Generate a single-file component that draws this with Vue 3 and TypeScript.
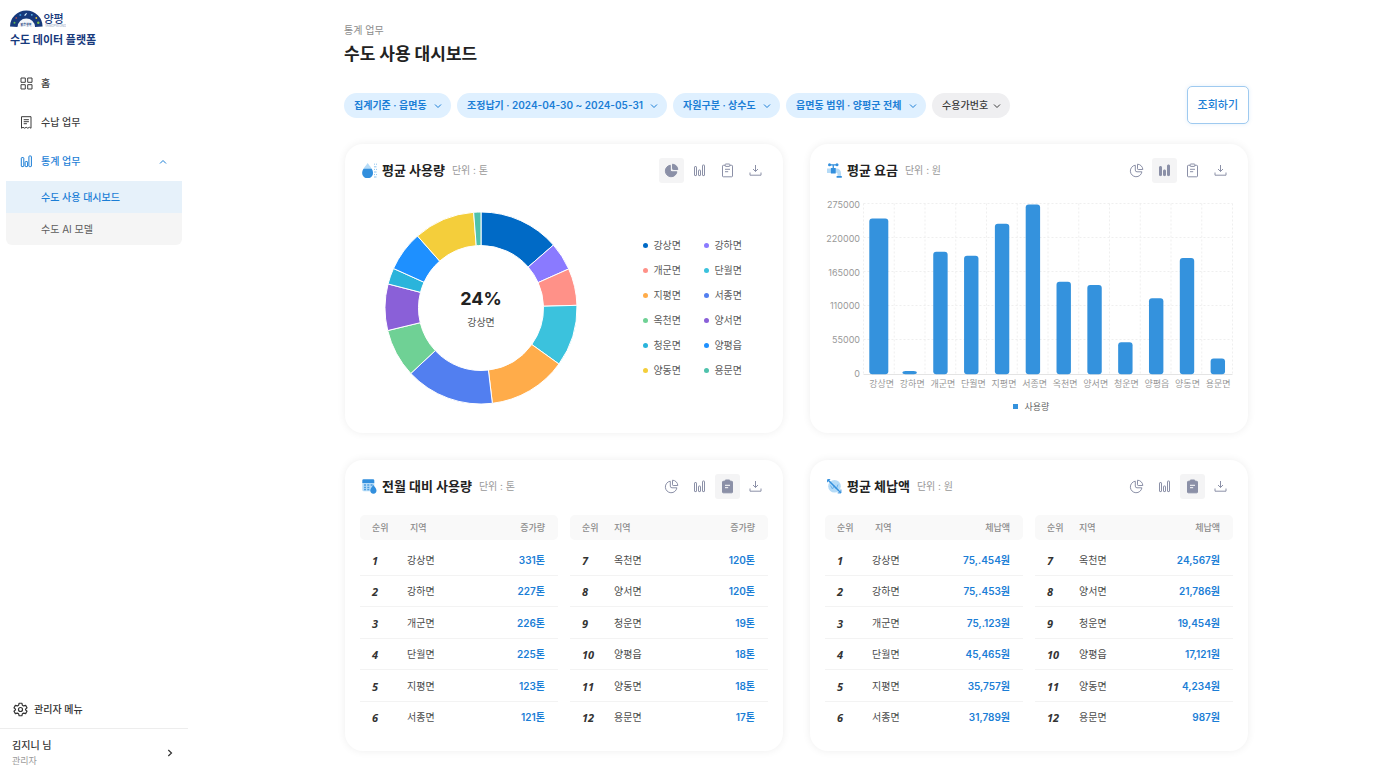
<script setup lang="ts">
import { reactive } from 'vue'

type View = 'pie' | 'bar' | 'list'
type CardKey = 'usage' | 'fee' | 'change' | 'arrears'

interface Slice {
  name: string
  color: string
  end: number
}

interface RankRow {
  rank: number
  region: string
  value: string
}

const slices: Slice[] = [
  { name: '강상면', color: '#006ac6', end: 49 },
  { name: '강하면', color: '#8a7aff', end: 66 },
  { name: '개군면', color: '#ff9188', end: 88.4 },
  { name: '단월면', color: '#3bc2dd', end: 125.7 },
  { name: '지평면', color: '#ffac4a', end: 173.2 },
  { name: '서종면', color: '#527ff0', end: 227 },
  { name: '옥천면', color: '#6fd195', end: 256.4 },
  { name: '양서면', color: '#8a60d8', end: 284.5 },
  { name: '청운면', color: '#2ab4db', end: 294.3 },
  { name: '양평읍', color: '#1e90ff', end: 318.6 },
  { name: '양동면', color: '#f4ce3b', end: 355.6 },
  { name: '용문면', color: '#4fc2ac', end: 360 },
]

function point(radius: number, degrees: number): string {
  const a = (degrees * Math.PI) / 180
  return `${(96 + radius * Math.sin(a)).toFixed(2)} ${(96 - radius * Math.cos(a)).toFixed(2)}`
}

function slicePath(index: number): string {
  const start = index === 0 ? 0 : slices[index - 1].end
  const end = slices[index].end
  const outer = 96
  const inner = 62.5
  return `M${point(outer, start)}A${outer} ${outer} 0 0 1 ${point(outer, end)}L${point(inner, end)}A${inner} ${inner} 0 0 0 ${point(inner, start)}Z`
}

const ticks = [275000, 220000, 165000, 110000, 55000, 0]
const fees = [250500, 5500, 197000, 190500, 242000, 273000, 149000, 143500, 51500, 122500, 187000, 25500]
const bars = fees.map((fee, i) => {
  const width = i === 0 ? 19 : 14.4
  const height = (fee / 275000) * 171
  return { x: 53.8 + i * 30.82 - width / 2, y: 177.3 - height, width, height, name: slices[i].name, labelX: 56.7 + i * 30.58 }
})

function rows(values: string[]): RankRow[][] {
  const all = values.map((value, i) => ({ rank: i + 1, region: slices[i].name, value }))
  return [all.slice(0, 6), all.slice(6)]
}

const tables: { key: CardKey; title: string; unit: string; column: string; groups: RankRow[][] }[] = [
  {
    key: 'change',
    title: '전월 대비 사용량',
    unit: '톤',
    column: '증가량',
    groups: rows(['331톤', '227톤', '226톤', '225톤', '123톤', '121톤', '120톤', '120톤', '19톤', '18톤', '18톤', '17톤']),
  },
  {
    key: 'arrears',
    title: '평균 체납액',
    unit: '원',
    column: '체납액',
    groups: rows(['75,.454원', '75,.453원', '75,.123원', '45,465원', '35,757원', '31,789원', '24,567원', '21,786원', '19,454원', '17,121원', '4,234원', '987원']),
  },
]

const cards: { key: CardKey; title: string; unit: string }[] = [
  { key: 'usage', title: '평균 사용량', unit: '톤' },
  { key: 'fee', title: '평균 요금', unit: '원' },
  ...tables,
]

const views: { key: View; label: string }[] = [
  { key: 'pie', label: '원형 차트' },
  { key: 'bar', label: '막대 차트' },
  { key: 'list', label: '표' },
]

const active = reactive<Record<CardKey, View>>({ usage: 'pie', fee: 'bar', change: 'list', arrears: 'list' })

const filters: { kind: 'select' | 'button'; label: string; plain?: boolean }[] = [
  { kind: 'select', label: '집계기준 · 읍면동' },
  { kind: 'button', label: '조정납기 · 2024-04-30 ~ 2024-05-31' },
  { kind: 'select', label: '자원구분 · 상수도' },
  { kind: 'select', label: '읍면동 범위 · 양평군 전체' },
  { kind: 'button', label: '수용가번호', plain: true },
]
</script>

<template>
  <div class="layout">
    <aside class="sidebar">
      <a href="#" class="brand">
        <svg class="brand-mark" width="56" height="18" viewBox="0 0 56 18" aria-hidden="true">
          <path d="M0 16.500A16.300 16 0 0 1 32.600 16.500L25 17A9 8.500 0 0 0 7.600 17Z" fill="#17397c" />
          <path d="M7.600 17A8.700 8.500 0 0 1 25 17Z" fill="#f3f6fa" />
          <circle cx="4.500" cy="12.800" r="1" fill="#5fb84f" />
          <circle cx="6.200" cy="8" r=".8" fill="#e2574c" />
          <circle cx="10.300" cy="5" r="1" fill="#3d9ae0" />
          <path d="M14.500 5.500c1-.2.900-1.700 2.300-2" stroke="#d7f0ff" stroke-width="1.200" fill="none" />
          <circle cx="21.800" cy="4.800" r=".9" fill="#5fb9e8" />
          <circle cx="26.300" cy="8" r=".9" fill="#e3c43e" />
          <circle cx="28.300" cy="12.800" r="1.200" fill="#7fc34b" />
          <text x="10.500" y="16" class="mark-small">맑은행복</text>
          <text x="33.500" y="13" class="mark-name">양평</text>
          <text x="35" y="17" class="mark-latin">YANGPYEONG</text>
        </svg>
        <span class="brand-name">수도 데이터 플랫폼</span>
      </a>

      <nav class="nav">
        <a href="#" class="nav-item">
          <svg width="13" height="13" viewBox="0 0 13 13" fill="none" stroke="currentColor">
            <path d="M1 1h4.300v4.300H1zM7.700 1H12v4.300H7.700zM1 7.700h4.300V12H1zM7.700 7.700H12V12H7.700z" />
          </svg>
          홈
        </a>
        <a href="#" class="nav-item">
          <svg width="13" height="13" viewBox="0 0 13 13" fill="none" stroke="currentColor">
            <path d="M1.500.7h9.500v11.500l-1.600-.9-1.600.9-1.600-.9-1.600.9-1.600-.9-1.500.9zM3.700 3.700h5.200M3.700 5.700h5.200M3.700 7.700h3.200" />
          </svg>
          수납 업무
        </a>
        <button type="button" class="nav-item open" aria-expanded="true">
          <svg width="13" height="13" viewBox="0 0 13 13" fill="none" stroke="currentColor">
            <rect x="1.300" y="2.600" width="2.500" height="9" rx=".6" />
            <rect x="5.100" y="6.600" width="2.500" height="5" rx=".6" />
            <rect x="8.900" y="1" width="2.500" height="10.600" rx=".6" />
          </svg>
          통계 업무
          <svg class="nav-caret" width="8" height="8" viewBox="0 0 8 8" fill="none" stroke="currentColor">
            <path d="M1 5.500 4 2.500l3 3" />
          </svg>
        </button>
        <div class="submenu">
          <a href="#" class="sub-item current" aria-current="page">수도 사용 대시보드</a>
          <a href="#" class="sub-item">수도 AI 모델</a>
        </div>
      </nav>

      <a href="#" class="admin">
        <svg width="15" height="15" viewBox="0 0 24 24" fill="none" stroke="currentColor" stroke-width="1.900" stroke-linejoin="round">
          <path d="M9.800 2h4.400l.8 3.100 2.100 1.200 3.100-.9 2.200 3.800-2.300 2.200v1.200l2.300 2.200-2.200 3.800-3.100-.9-2.100 1.200-.8 3.100H9.800L9 18.900l-2.100-1.200-3.100.9-2.200-3.800 2.300-2.200v-1.200L1.600 9.200l2.200-3.800 3.100.9L9 5.100z" />
          <circle cx="12" cy="12" r="3.200" />
        </svg>
        관리자 메뉴
      </a>
      <button type="button" class="user">
        <span class="user-text">
          <span class="user-name">김지니 님</span>
          <span class="user-role">관리자</span>
        </span>
        <svg width="8" height="8" viewBox="0 0 8 8" fill="none" stroke="currentColor" stroke-width="1.200">
          <path d="M2.300 1 5.500 4l-3.200 3" />
        </svg>
      </button>
    </aside>

    <main class="main">
      <div class="content">
        <p class="crumb">통계 업무</p>
        <h1 class="title">수도 사용 대시보드</h1>

        <form class="filters" @submit.prevent>
          <div v-for="filter in filters" :key="filter.label" class="pill" :class="{ plain: filter.plain }">
            <select v-if="filter.kind === 'select'" class="pill-control" :aria-label="filter.label">
              <option>{{ filter.label }}</option>
            </select>
            <button v-else type="button" class="pill-control" aria-haspopup="true">{{ filter.label }}</button>
            <svg class="pill-caret" width="8" height="8" viewBox="0 0 8 8" fill="none" stroke="currentColor">
              <path d="M1 2.500 4 5.500l3-3" />
            </svg>
          </div>
          <button type="submit" class="search">조회하기</button>
        </form>

        <div class="grid">
          <section v-for="card in cards" :key="card.key" class="card">
            <header class="card-head">
              <svg v-if="card.key === 'usage'" width="15" height="15" viewBox="0 0 15 15" aria-hidden="true">
                <path d="M5.700 0C4 2.600.2 6.400.2 9.900a5.400 5.400 0 0 0 10.800 0C11 6.400 7.400 2.600 5.700 0z" fill="#b5dbf7" />
                <path d="M1.600 5.700C.8 7 .2 8.500.2 9.900a5.400 5.400 0 0 0 10.800 0c0-1.400-.6-2.900-1.400-4.200z" fill="#328fdd" />
                <path d="M12 1.200h1M14 1.200h1M12 3.800h2.500M12 6.400h1M14 6.400h1M12 9h2.500M12 11.600h1M14 11.600h1M12 14h2.500" stroke="#8bc3ef" stroke-width="1" />
              </svg>
              <svg v-else-if="card.key === 'fee'" width="15" height="15" viewBox="0 0 15 15" aria-hidden="true">
                <path d="M0 5.500h4v4.500H0zM8 5.500h1.500A4.500 4.500 0 0 1 14 10v3h-3.500v-2a1.200 1.200 0 0 0-1.200-1.200H8z" fill="#b5dbf7" />
                <path d="M2.500 1.200h7.500v1.200H2.500zM5.600 2h1.300v3H5.600zM3.900 5h4.800v5.500H3.900zM9.600 13h5.200v1.700H9.600z" fill="#328fdd" />
                <circle cx="2.500" cy="1.800" r="1.500" fill="#328fdd" />
                <circle cx="10" cy="1.800" r="1.500" fill="#328fdd" />
              </svg>
              <svg v-else-if="card.key === 'change'" width="15" height="15" viewBox="0 0 15 15" aria-hidden="true">
                <path d="M.3 3.500h12v7.300a1.500 1.500 0 0 1-1.500 1.500h-9A1.500 1.500 0 0 1 .3 10.800z" fill="#b5dbf7" />
                <path d="M.3 3.900V1.600A1.300 1.300 0 0 1 1.600.3H11a1.300 1.300 0 0 1 1.300 1.300v2.300z" fill="#328fdd" />
                <path d="M2 6h2M5.300 6h2M8.600 6h2M2 8.300h2M5.300 8.300h2M2 10.500h2M5.300 10.500h2" stroke="#4d9fe2" stroke-width="1.300" />
                <path d="M11.300 6c-1 1.500-3 3.600-3 5.600a3.100 3.100 0 0 0 6.200 0c0-2-2.200-4.100-3.200-5.600z" fill="#328fdd" />
              </svg>
              <svg v-else width="15" height="15" viewBox="0 0 15 15" aria-hidden="true">
                <circle cx="7.500" cy="7.300" r="6.300" fill="#b5dbf7" />
                <path d="M3.500 6.500 5.500 10l1.800-3.500M7.500 7.500l1.800 2.500L11 5.500" stroke="#6cb2ea" stroke-width="1" fill="none" />
                <path d="M.8.800 13.800 13.800" stroke="#328fdd" stroke-width="1.500" />
                <path d="M.6 3.200V.6h2.600M13.900 10.500v3.400h-3.200" stroke="#328fdd" stroke-width="1" fill="none" />
              </svg>
              <h2 class="card-title">{{ card.title }}</h2>
              <span class="card-unit">단위 : {{ card.unit }}</span>

              <div class="tools">
                <button
                  v-for="view in views"
                  :key="view.key"
                  type="button"
                  class="tool"
                  :class="{ on: active[card.key] === view.key }"
                  :aria-label="view.label"
                  :aria-pressed="active[card.key] === view.key"
                  @click="active[card.key] = view.key"
                >
                  <svg v-if="view.key === 'pie'" width="15" height="15" viewBox="0 0 15 15" class="line">
                    <path class="body" d="M6.300 2.200A5.800 5.800 0 1 0 12.900 8.800H8a1.700 1.700 0 0 1-1.700-1.700z" />
                    <path class="body" d="M8.500 1.200a5.500 5.500 0 0 1 5.300 5.300H9.200a.7.7 0 0 1-.7-.7z" />
                  </svg>
                  <svg v-else-if="view.key === 'bar'" width="15" height="15" viewBox="0 0 15 15" class="line">
                    <rect class="body" x="2.500" y="3.600" width="2" height="9" rx=".5" />
                    <rect class="body" x="6.500" y="7" width="2" height="5.600" rx=".5" />
                    <rect class="body" x="10.500" y="2" width="2" height="10.600" rx=".5" />
                  </svg>
                  <svg v-else width="15" height="15" viewBox="0 0 15 15" class="line">
                    <rect class="body" x="2.500" y="2.300" width="10" height="11.500" rx=".8" />
                    <rect class="clip" x="5.200" y="1" width="4.600" height="2.400" rx=".5" />
                    <path class="detail" d="M5 6.300h5M5 8.700h3.200" />
                  </svg>
                </button>
                <button type="button" class="tool" aria-label="내려받기">
                  <svg width="15" height="15" viewBox="0 0 15 15" class="line">
                    <path d="M7.500 2v6.500M5 6 7.500 8.500 10 6M2 9.500v2.700h11V9.500" />
                  </svg>
                </button>
              </div>
            </header>

            <div v-if="card.key === 'usage'" class="donut-body">
              <div class="donut">
                <svg width="192" height="192" viewBox="0 0 192 192" aria-hidden="true">
                  <path v-for="(slice, i) in slices" :key="slice.name" :d="slicePath(i)" :fill="slice.color" stroke="#fff" stroke-width="1" />
                </svg>
                <div class="donut-label">
                  <strong>24%</strong>
                  <span>강상면</span>
                </div>
              </div>
              <ul class="legend">
                <li v-for="slice in slices" :key="slice.name">
                  <i class="dot" :style="{ background: slice.color }"></i>{{ slice.name }}
                </li>
              </ul>
            </div>

            <div v-else-if="card.key === 'fee'" class="bar-body">
              <svg class="bar-chart" viewBox="0 0 408 218" role="img" aria-label="지역별 평균 요금">
                <g stroke="#efefef" stroke-dasharray="2 2">
                  <path v-for="n in 5" :key="'h' + n" :d="`M38.500 ${6.5 + (n - 1) * 34}H407.500`" />
                  <path v-for="n in 13" :key="'v' + n" :d="`M${38.5 + (n - 1) * 30.75} 6.500V177.500`" />
                </g>
                <path d="M38.500 177.500H407.500" stroke="#e4e4e4" />
                <text v-for="(tick, i) in ticks" :key="tick" class="tick" x="35" :y="11 + i * 33.8" text-anchor="end">{{ tick }}</text>
                <g v-for="bar in bars" :key="bar.name">
                  <rect :x="bar.x" :y="bar.y" :width="bar.width" :height="bar.height" rx="3" fill="#3492dd" />
                  <text class="region" :x="bar.labelX" y="190" text-anchor="middle">{{ bar.name }}</text>
                </g>
                <rect x="188" y="207" width="5" height="5" fill="#3492dd" />
                <text class="series" x="199.500" y="213">사용량</text>
              </svg>
            </div>

            <template v-for="table in tables" :key="table.key">
              <div v-if="table.key === card.key" class="tables">
                <table v-for="(group, g) in table.groups" :key="g" class="rank-table" :class="{ first: g === 0 }">
                  <thead>
                    <tr>
                      <th scope="col" class="rank">순위</th>
                      <th scope="col" class="region-col">지역</th>
                      <th scope="col" class="value">{{ table.column }}</th>
                    </tr>
                  </thead>
                  <tbody>
                    <tr v-for="row in group" :key="row.rank">
                      <td class="rank">{{ row.rank }}</td>
                      <td class="region-col">{{ row.region }}</td>
                      <td class="value">{{ row.value }}</td>
                    </tr>
                  </tbody>
                </table>
              </div>
            </template>
          </section>
        </div>
      </div>
    </main>
  </div>
</template>

<style>
html,
body {
  background: #fff;
}
</style>

<style scoped>
.layout,
.layout * {
  box-sizing: border-box;
}

.layout {
  display: flex;
  height: 100vh;
  overflow: hidden;
  background: #fff;
  color: #3c3c3c;
  font-family: Inter, 'Noto Sans CJK KR', sans-serif;
  font-size: 10px;
  line-height: 15px;
}

a {
  color: inherit;
  text-decoration: none;
}

button,
select {
  border: 0;
  background: none;
  padding: 0;
  margin: 0;
  color: inherit;
  font: inherit;
  cursor: pointer;
}

svg {
  display: block;
  flex: none;
}

/* Sidebar */
.sidebar {
  flex: none;
  display: flex;
  flex-direction: column;
  width: 188px;
  padding-top: 10px;
}

.brand {
  display: flex;
  flex-direction: column;
  gap: 4px;
  padding-left: 10px;
  color: #17397c;
}

.mark-small {
  font-size: 3px;
  font-weight: 700;
  fill: #17397c;
}

.mark-name {
  font-size: 11px;
  font-weight: 500;
  fill: #17397c;
}

.mark-latin {
  font-size: 3px;
  fill: #8c9cbb;
}

.brand-name {
  font-size: 11px;
  font-weight: 700;
  line-height: 16px;
}

.nav {
  display: flex;
  flex-direction: column;
  margin-top: 16px;
}

.nav-item {
  display: flex;
  align-items: center;
  gap: 8px;
  height: 39px;
  padding: 0 21px 0 20px;
  font-weight: 500;
  text-align: left;
}

.nav-item.open {
  color: #1b7ed6;
}

.nav-caret {
  margin-left: auto;
}

.submenu {
  display: flex;
  flex-direction: column;
  margin: 0 6px;
  border-radius: 0 0 6px 6px;
  overflow: hidden;
  background: #f5f5f5;
}

.sub-item {
  height: 32px;
  padding-left: 35px;
  line-height: 32px;
  color: #5c5c5c;
}

.sub-item.current {
  background: #e6f1fa;
  color: #1b7ed6;
  font-weight: 500;
}

.admin {
  display: flex;
  align-items: center;
  gap: 6px;
  margin-top: auto;
  padding: 0 13px 11px;
  color: #333;
  font-weight: 500;
}

.user {
  display: flex;
  align-items: center;
  justify-content: space-between;
  height: 50px;
  padding: 0 14px 2px 12px;
  border-top: 1px solid #ededed;
  text-align: left;
  color: #333;
}

.user-text {
  display: flex;
  flex-direction: column;
}

.user-name {
  font-weight: 500;
}

.user-role {
  font-size: 9px;
  color: #999;
}

/* Main */
.main {
  flex: 1;
  min-width: 0;
  padding: 23px 0 26px 5px;
}

.content {
  width: 100%;
  max-width: 905px;
  margin: 0 auto;
}

.crumb {
  margin: 0;
  color: #8c8c8c;
}

.title {
  margin: 3px 0 19px;
  font-size: 17px;
  font-weight: 700;
  line-height: 26px;
  color: #222;
}

.filters {
  display: flex;
  align-items: center;
  gap: 6px;
}

.pill {
  position: relative;
  height: 25px;
  border-radius: 13px;
  background: #dff0ff;
  color: #1b7ed6;
}

.pill.plain {
  background: #efeff1;
  color: #3c3c3c;
}

.pill-control {
  appearance: none;
  height: 25px;
  padding: 0 24px 0 10px;
  border-radius: 13px;
  font-weight: 600;
  white-space: nowrap;
}

.plain .pill-control {
  padding-right: 22px;
  font-weight: 500;
}

.pill-caret {
  position: absolute;
  top: 9px;
  right: 9px;
  pointer-events: none;
}

.search {
  height: 38px;
  margin-left: auto;
  padding: 0 10px;
  border: 1px solid #9fcaf0;
  border-radius: 5px;
  background: #fff;
  box-shadow: 0 0 4px rgb(27 126 214 / 12%);
  color: #1b7ed6;
  font-size: 11px;
  font-weight: 500;
}

.grid {
  display: grid;
  grid-template-columns: 1fr 1fr;
  gap: 27px;
  margin-top: 20px;
  padding: 0 1px;
}

.card {
  min-width: 0;
  padding: 14px 15px 18px;
  border-radius: 18px;
  background: #fff;
  box-shadow: 0 0 8px rgb(0 0 0 / 7%);
}

.card-head {
  display: flex;
  align-items: center;
  gap: 5px;
  padding-left: 2px;
}

.card-title {
  margin: 0;
  padding-bottom: 2px;
  font-size: 13px;
  font-weight: 700;
  line-height: 20px;
  color: #222;
}

.card-unit {
  margin-left: 2px;
  color: #999;
}

.tools {
  display: flex;
  gap: 3px;
  margin-left: auto;
}

.tool {
  display: grid;
  place-items: center;
  width: 25px;
  height: 25px;
  border-radius: 3px;
  color: #8b90a7;
}

.tool.on {
  background: #f4f4f5;
}

.line {
  fill: none;
  stroke: currentColor;
  stroke-width: 1;
}

.clip {
  fill: #fff;
}

.on .body {
  fill: currentColor;
}

.on .clip {
  fill: currentColor;
}

.on .detail {
  stroke: #fff;
}

/* Donut */
.donut-body {
  display: flex;
  align-items: center;
  justify-content: space-between;
  padding: 29px 26px 10px 25px;
}

.donut {
  position: relative;
}

.donut-label {
  position: absolute;
  inset: 0;
  display: flex;
  flex-direction: column;
  align-items: center;
  justify-content: center;
  gap: 4px;
  color: #555;
}

.donut-label strong {
  font-size: 18px;
  font-weight: 700;
  line-height: 24px;
  color: #222;
}

.legend {
  display: grid;
  grid-template-columns: 61px auto;
  margin: 0;
  padding: 0;
  list-style: none;
  line-height: 25px;
  color: #5c5c5c;
}

.legend li {
  display: flex;
  align-items: center;
  gap: 5px;
}

.dot {
  width: 5px;
  height: 5px;
  border-radius: 50%;
}

/* Bar chart */
.bar-body {
  padding-top: 14px;
}

.bar-chart {
  width: 100%;
}

.tick {
  font-size: 9px;
  fill: #999;
}

.region {
  font-size: 9px;
  fill: #999;
}

.series {
  font-size: 9px;
  fill: #666;
}

/* Ranking tables */
.tables {
  display: grid;
  grid-template-columns: 1fr 1fr;
  gap: 12px;
  margin-top: 16px;
}

.rank-table {
  width: 100%;
  height: 218px;
  border-collapse: separate;
  border-spacing: 0;
  table-layout: fixed;
}

th {
  height: 25px;
  padding: 0;
  background: #f9f9f9;
  color: #8c8c8c;
  font-size: 9px;
  font-weight: 500;
  text-align: left;
}

th:first-child {
  border-radius: 5px 0 0 5px;
}

th:last-child {
  border-radius: 0 5px 5px 0;
}

tbody::before {
  content: '';
  display: table-row;
  height: 4px;
}

td {
  padding: 2px 0 0;
  border-bottom: 1px solid #f3f3f3;
  color: #4c4c4c;
}

tr:last-child td {
  border-bottom-color: transparent;
}

.rank {
  width: 44px;
  padding-left: 12px;
}

.first .rank {
  width: 47px;
}

.first th.region-col {
  padding-left: 3px;
}

td.rank {
  font-family: 'Noto Sans', sans-serif;
  font-size: 11px;
  font-style: italic;
  font-weight: 700;
  color: #333;
}

.value {
  width: 76px;
  padding-right: 13px;
  text-align: right;
}

td.value {
  color: #1b7ed6;
  font-weight: 600;
}
</style>
